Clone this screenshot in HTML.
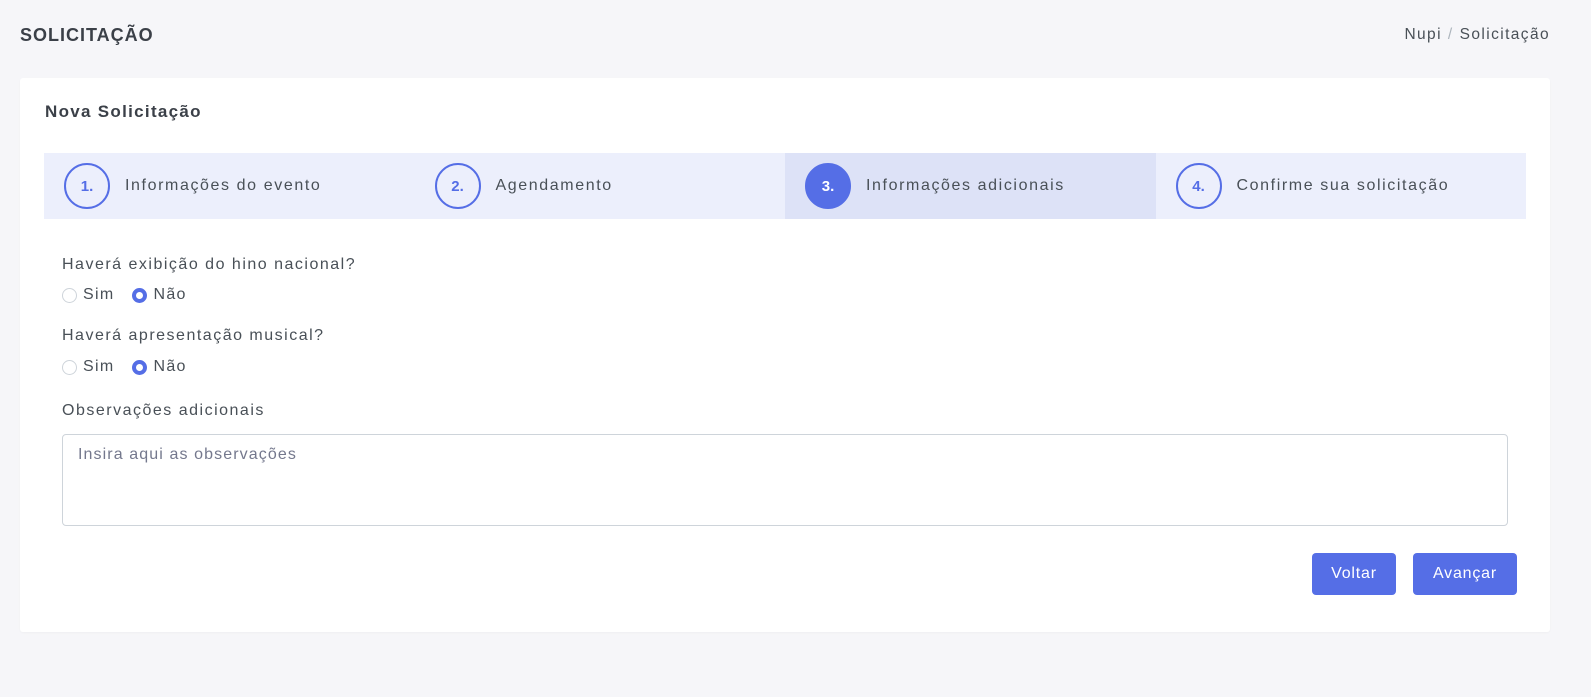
<!DOCTYPE html>
<html><head><meta charset="utf-8"><style>
*{box-sizing:border-box;margin:0;padding:0}
body{width:1591px;height:697px;background:#f6f6f9;font-family:"Liberation Sans",sans-serif;color:#495057;position:relative;overflow:hidden}
.abs{position:absolute;white-space:nowrap}
.h{left:20px;top:25px;font-size:18px;font-weight:bold;color:#3b4048;letter-spacing:1px}
.bc{right:41px;top:26px;font-size:15.5px;color:#495057;letter-spacing:1.4px}
.bc span{color:#adb5bd;margin:0 6px}
.card{left:20px;top:78px;width:1530px;height:554px;background:#fff;border-radius:3px;box-shadow:0 1px 2px rgba(0,0,0,.03)}
.title{left:45px;top:102px;font-size:17px;font-weight:bold;color:#3b4048;letter-spacing:1.3px}
.steps{left:44px;top:153px;width:1482px;height:66px;background:#eceffc;display:flex}
.st{width:370.5px;height:66px;display:flex;align-items:center;padding-left:20px;font-size:16px;color:#495057;letter-spacing:1.6px}
.st.a{background:#dde2f7}
.c{width:46px;height:46px;border-radius:50%;border:2px solid #556ee6;color:#556ee6;display:flex;align-items:center;justify-content:center;font-size:15px;margin-right:15px;font-weight:bold;letter-spacing:0}
.st.a .c{background:#556ee6;color:#fff}
.lbl{left:62px;font-size:16px;color:#495057;letter-spacing:1.5px}
.rad{left:62px;font-size:16px;display:flex;align-items:center;color:#495057;letter-spacing:1.3px}
.r{width:15px;height:15px;border-radius:50%;border:1px solid #ced4da;margin-right:6px;background:#fff}
.r.on{border:4px solid #556ee6}
.ta{left:62px;top:434px;width:1446px;height:92px;border:1px solid #ced4da;border-radius:4px;padding:11px 15px;font-size:16px;color:#74788d;letter-spacing:1.1px}
.btn{top:553px;height:42px;background:#556ee6;color:#fff;border-radius:4px;font-size:16px;display:flex;align-items:center;justify-content:center;letter-spacing:0.8px}
</style></head><body>
<div class="abs h">SOLICITAÇÃO</div>
<div class="abs bc">Nupi<span>/</span>Solicitação</div>
<div class="abs card"></div>
<div class="abs title">Nova Solicitação</div>
<div class="abs steps">
<div class="st"><div class="c">1.</div>Informações do evento</div>
<div class="st"><div class="c">2.</div>Agendamento</div>
<div class="st a"><div class="c">3.</div>Informações adicionais</div>
<div class="st"><div class="c">4.</div>Confirme sua solicitação</div>
</div>
<div class="abs lbl" style="top:256px">Haverá exibição do hino nacional?</div>
<div class="abs rad" style="top:286px"><div class="r"></div>Sim<div class="r on" style="margin-left:18px"></div>Não</div>
<div class="abs lbl" style="top:327px">Haverá apresentação musical?</div>
<div class="abs rad" style="top:358px"><div class="r"></div>Sim<div class="r on" style="margin-left:18px"></div>Não</div>
<div class="abs lbl" style="top:402px">Observações adicionais</div>
<div class="abs ta">Insira aqui as observações</div>
<div class="abs btn" style="left:1312px;width:84px">Voltar</div>
<div class="abs btn" style="left:1413px;width:104px">Avançar</div>
</body></html>
